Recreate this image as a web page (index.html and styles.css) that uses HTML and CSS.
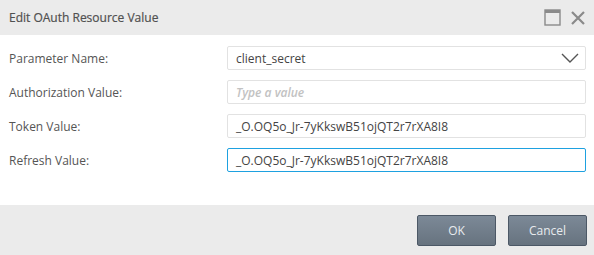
FILE: index.html
```html
<!DOCTYPE html>
<html>
<head>
<meta charset="utf-8">
<link rel="stylesheet" href="styles.css">
</head>
<body>
<div class="dialog">
  <div class="header">
    <div class="title">Edit OAuth Resource Value</div>
    <div class="tools">
      <svg class="icon" width="17" height="17" viewBox="0 0 17 17">
        <rect x="1" y="1" width="15" height="15" fill="none" stroke="#8a8a8a" stroke-width="1.4"/>
        <rect x="1" y="1" width="15" height="3" fill="#8a8a8a"/>
      </svg>
      <svg class="icon" width="16" height="16" viewBox="0 0 16 16">
        <path d="M2 2 L14 14 M14 2 L2 14" stroke="#8a8a8a" stroke-width="2.2" fill="none"/>
      </svg>
    </div>
  </div>
  <div class="body">
    <div class="row">
      <div class="label">Parameter Name:</div>
      <div class="field select">
        <span class="value">client_secret</span>
        <svg class="chev" width="18" height="10" viewBox="0 0 18 10"><path d="M1 1 L9 9 L17 1" stroke="#555" stroke-width="1.4" fill="none"/></svg>
      </div>
    </div>
    <div class="row">
      <div class="label">Authorization Value:</div>
      <div class="field"><span class="placeholder">Type a value</span></div>
    </div>
    <div class="row">
      <div class="label">Token Value:</div>
      <div class="field"><span class="value">_O.OQ5o_Jr-7yKkswB51ojQT2r7rXA8I8</span></div>
    </div>
    <div class="row">
      <div class="label">Refresh Value:</div>
      <div class="field focus"><span class="value">_O.OQ5o_Jr-7yKkswB51ojQT2r7rXA8I8</span></div>
    </div>
  </div>
  <div class="footer">
    <button class="btn">OK</button>
    <button class="btn">Cancel</button>
  </div>
</div>
</body>
</html>
```
FILE: styles.css
```css
html, body {
  margin: 0;
  padding: 0;
  background: #fff;
}
body {
  font-family: "Open Sans", sans-serif;
  font-size: 12px;
  color: #555;
}
.dialog {
  width: 594px;
  height: 255px;
  display: flex;
  flex-direction: column;
}
.header {
  height: 35px;
  background: #ebebeb;
  display: flex;
  align-items: center;
  justify-content: space-between;
  padding: 0 8px 0 9px;
  box-sizing: border-box;
}
.title {
  font-weight: 500;
  color: #505050;
  font-size: 12px;
  -webkit-text-stroke: 0.2px #505050;
}
.tools {
  display: flex;
  align-items: center;
  gap: 9px;
}
.icon { display: block; }
.body {
  flex: 1;
  padding: 11px 8px 0 9px;
  display: flex;
  flex-direction: column;
  gap: 10px;
}
.row {
  display: flex;
  align-items: center;
  height: 24px;
}
.label {
  width: 218px;
  color: #555;
}
.field {
  width: 359px;
  height: 24px;
  box-sizing: border-box;
  border: 1px solid #e2e2e2;
  border-radius: 2px;
  display: flex;
  align-items: center;
  padding: 0 8px;
  justify-content: space-between;
}
.field.focus {
  border-color: #1ea1e0;
}
.value { color: #444; }
.placeholder {
  color: #c2c2c2;
  font-style: italic;
  font-weight: 600;
}
.chev { margin-right: -2px; }
.footer {
  height: 50px;
  background: #ebebeb;
  display: flex;
  align-items: center;
  justify-content: flex-end;
  gap: 12px;
  padding: 0 7px 0 0;
}
.btn {
  width: 79px;
  height: 31px;
  border: 1px solid #4c5866;
  border-radius: 2px;
  background: linear-gradient(#7c8997, #67737f);
  color: #e8ebee;
  font-family: "Open Sans", sans-serif;
  font-size: 12px;
  margin-top: 1px;
}
```
